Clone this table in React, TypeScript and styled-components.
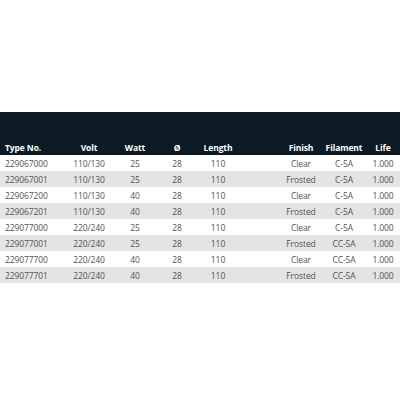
import React, { FC } from 'react';
import styled, { createGlobalStyle } from 'styled-components';

const GlobalStyle = createGlobalStyle`
  html, body {
    margin: 0;
    padding: 0;
    background: #ffffff;
  }
  body {
    font-family: 'Open Sans', 'Liberation Sans', sans-serif;
  }
`;

const COLUMNS = '62px 54px 38px 46px 36px 44px 42px 44px 34px';

const Page = styled.div`
  width: 400px;
  height: 400px;
  overflow: hidden;
  padding-top: 112px;
  box-sizing: border-box;
`;

const HeaderBand = styled.div`
  background-color: #0b1a24;
  height: 43px;
  box-sizing: border-box;
  padding-top: 27px;
`;

const Row = styled.div<{ $shaded?: boolean; $head?: boolean }>`
  display: grid;
  grid-template-columns: ${COLUMNS};
  height: 16px;
  align-items: center;
  font-size: 8.5px;
  letter-spacing: -0.1px;
  color: ${(p) => (p.$head ? '#ffffff' : '#525252')};
  font-weight: ${(p) => (p.$head ? 700 : 400)};
  background-color: ${(p) => (p.$shaded ? '#e4e4e4' : 'transparent')};
  white-space: nowrap;
`;

const Cell = styled.div<{ $align?: 'left' | 'center' }>`
  text-align: ${(p) => p.$align ?? 'center'};
  padding-left: ${(p) => (p.$align === 'left' ? '5px' : '0')};
`;

const headers = ['Type No.', 'Volt', 'Watt', 'Ø', 'Length', '', 'Finish', 'Filament', 'Life'];

const rows = [
  ['229067000', '110/130', '25', '28', '110', 'Clear', 'C-5A', '1.000'],
  ['229067001', '110/130', '25', '28', '110', 'Frosted', 'C-5A', '1.000'],
  ['229067200', '110/130', '40', '28', '110', 'Clear', 'C-5A', '1.000'],
  ['229067201', '110/130', '40', '28', '110', 'Frosted', 'C-5A', '1.000'],
  ['229077000', '220/240', '25', '28', '110', 'Clear', 'C-5A', '1.000'],
  ['229077001', '220/240', '25', '28', '110', 'Frosted', 'CC-5A', '1.000'],
  ['229077700', '220/240', '40', '28', '110', 'Clear', 'CC-5A', '1.000'],
  ['229077701', '220/240', '40', '28', '110', 'Frosted', 'CC-5A', '1.000'],
];

const App: FC = () => {
  return (
    <>
      <GlobalStyle />
      <Page>
        <HeaderBand>
          <Row $head>
            {headers.map((h, i) => (
              <Cell key={i} $align={i === 0 ? 'left' : 'center'}>
                {h}
              </Cell>
            ))}
          </Row>
        </HeaderBand>
        {rows.map((r, idx) => {
          const cells = [...r.slice(0, 5), '', ...r.slice(5)];
          return (
            <Row key={r[0]} $shaded={idx % 2 === 1}>
              {cells.map((c, i) => (
                <Cell key={i} $align={i === 0 ? 'left' : 'center'}>
                  {c}
                </Cell>
              ))}
            </Row>
          );
        })}
      </Page>
    </>
  );
};

export default App;
